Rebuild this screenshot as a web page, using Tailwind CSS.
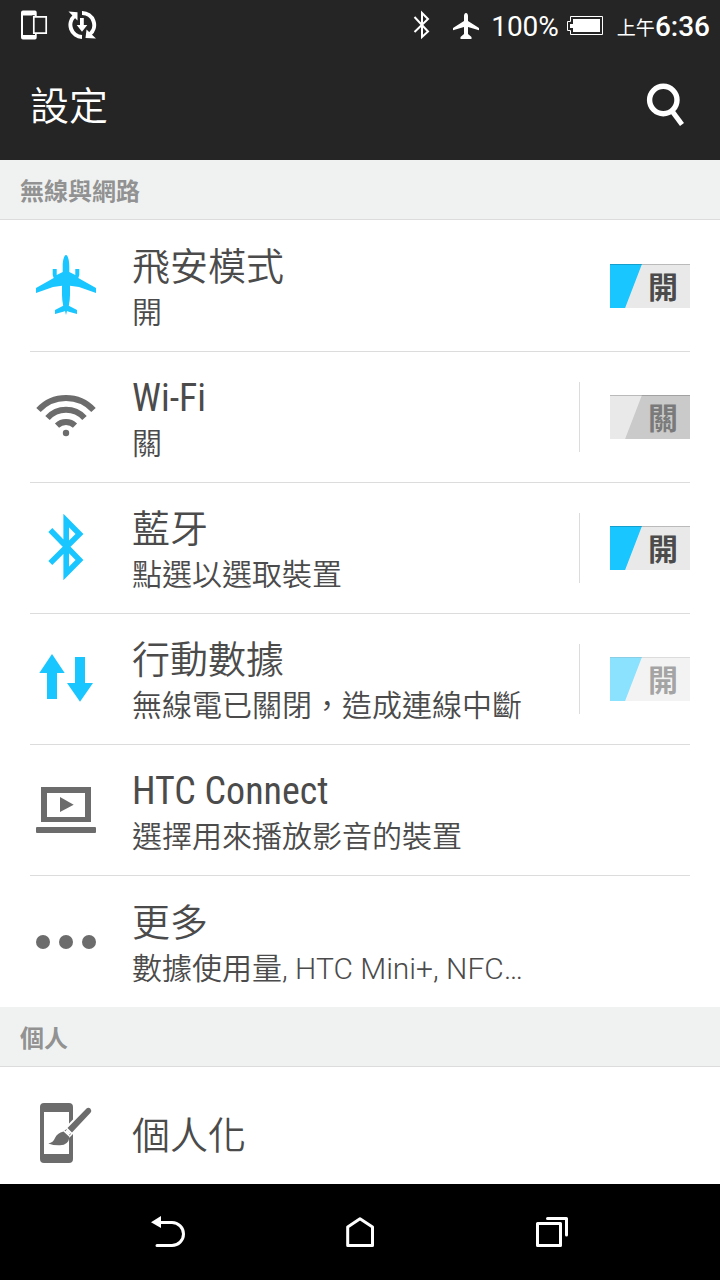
<!DOCTYPE html>
<html lang="zh-Hant">
<head>
<meta charset="utf-8">
<meta name="viewport" content="width=device-width, initial-scale=1">
<title>設定</title>
<script src="https://cdn.jsdelivr.net/npm/@tailwindcss/browser@4"></script>
</head>
<body class="flex h-screen flex-col overflow-hidden bg-white font-['Roboto','Noto_Sans_CJK_TC',sans-serif] text-[#4b4b4b]">

<header class="shrink-0 bg-[#252525] text-white">
  <div class="flex h-[50px] items-center justify-between pr-[10px] pl-5">
    <div class="flex items-center gap-5">
      <svg class="h-[30px] w-7" viewBox="0 0 28 30" fill="none" aria-hidden="true">
        <path fill="#fff" fill-rule="evenodd" d="M3 .5h12q1.700 0 1.700 2v25q0 2-1.700 2H3q-2 0-2-2v-25q0-2 2-2zM3 5.500V25h12V5.500z"/>
        <path fill="#252525" d="M12 5.500h2v19h-2z"/>
        <path d="M13.800 6.800h12.400v16.400H13.800z" fill="#252525" stroke="#fff" stroke-width="1.700"/>
      </svg>
      <svg class="h-[30px] w-[30px]" viewBox="0 0 30 30" fill="none" aria-hidden="true">
        <path d="M14 27A12 12 0 0 1 6.500 6M14 3A12 12 0 0 1 21.500 24.500" stroke="#fff" stroke-width="4"/>
        <path fill="#fff" d="M.5 1.500l9 .8v8.200zM28 28.500l-10.500-.5 1-8.500zM12 8h3.800v7h3.500L14 21.800 8.700 15H12z"/>
      </svg>
    </div>
    <div class="flex items-center">
      <svg class="mr-[22px] h-[30px] w-[18px]" viewBox="0 0 18 30" fill="none" stroke="#fff" stroke-width="2" aria-hidden="true"><path d="M1.500 7l13.500 14.500L9 27V3l6 6L1.500 22"/></svg>
      <svg class="mr-3 h-[30px] w-[26px]" viewBox="0 0 26 30" fill="#fff" aria-hidden="true"><path d="M13 3c1.400 0 2 1.500 2 3v5l11 7v2.200l-11-3.200v7l3.500 3V29h-11v-2l3.500-3v-7L0 20.200V18l11-7V6c0-1.500.6-3 2-3z"/></svg>
      <span class="mr-2 pt-1 text-[28px] leading-[46px]">100%</span>
      <svg class="mr-[14px] h-5 w-9" viewBox="0 0 36 20" aria-hidden="true"><path d="M3.500 1.500h32v18h-32v-4h-3v-9h3z" fill="none" stroke="#fff"/><path fill="#fff" d="M6 4h27v13H6v-4H3V9h3z"/></svg>
      <span class="pt-2 text-[19px] leading-[42px]">上午</span><span class="pt-1 text-[28px] leading-[46px] font-medium">6:36</span>
    </div>
  </div>
  <div class="flex h-[110px] items-center justify-between px-[30px]">
    <h1 class="pt-1 text-[39px] leading-[48px] font-[350]">設定</h1>
    <button type="button" aria-label="搜尋" class="h-[50px] w-[50px]">
      <svg class="h-[50px] w-[50px]" viewBox="0 0 50 50" fill="none" stroke="#fff" aria-hidden="true"><circle cx="23.300" cy="20" r="13.700" stroke-width="5.400"/><path d="M32 31l10 13.500" stroke-width="5"/></svg>
    </button>
  </div>
</header>

<main class="min-h-0 flex-1 overflow-hidden">
  <section>
    <h2 class="h-[60px] border-b border-[#dcdcdc] bg-[#f0f2f2] px-5 pt-1 text-[24px] leading-[56px] font-bold text-[#929292]">無線與網路</h2>
    <ul class="px-[30px] pt-px">
      <li class="flex h-[131px] items-center border-b border-[#dcdcdc]">
        <a href="#airplane" class="flex min-w-0 flex-1 items-center">
          <svg class="mr-[30px] h-[72px] w-[72px] shrink-0" viewBox="0 0 72 72" fill="#1ac6ff" aria-hidden="true"><path d="M36 5c2 0 3.300 6 3.300 11v6l6 3V19h4v6l-1 3L66 38v5l-17-6-9-1.300V45q0 5-1.200 10.700L47 60v4l-9-2.500-1-.5-1 4-1-4-1 .5L25 64v-4l8.200-4.300Q32 50 32 45v-9.300L23 37 6 43v-5l17.700-10-1-3v-6h4v6l6-3v-6c0-5 1.300-11 3.300-11z"/></svg>
          <span class="flex min-w-0 flex-col pt-2"><span class="text-[38px] leading-[46px] font-[350]">飛安模式</span><span class="text-[30px] leading-[46px] font-[350]">開</span></span>
        </a>
        <label class="flex h-[44px] w-20 items-center justify-end bg-[linear-gradient(to_bottom,#0003_1px,transparent_1px),linear-gradient(111deg,#1ac6ff_32.5%,#e9e9e9_33.5%)] pt-1 pr-3 text-[30px] leading-10 font-bold"><input type="checkbox" checked aria-label="飛安模式" class="sr-only"><span>開</span></label>
      </li>
      <li class="flex h-[131px] items-center border-b border-[#dcdcdc]">
        <a href="#wifi" class="flex min-w-0 flex-1 items-center">
          <svg class="mr-[30px] h-[72px] w-[72px] shrink-0" viewBox="0 0 72 72" fill="none" stroke="#6c6c6c" stroke-width="6" aria-hidden="true"><path d="M8.500 29A37.500 37.500 0 0 1 63.500 29M17.500 37A25 25 0 0 1 54.500 37M27 44.700A13 13 0 0 1 45 44.700"/><circle cx="36" cy="52" r="3.200" fill="#6c6c6c" stroke="none"/></svg>
          <span class="flex min-w-0 flex-col pt-2"><span class="font-['Roboto_Condensed','Roboto','Noto_Sans_CJK_TC',sans-serif] text-[38px] leading-[46px]">Wi-Fi</span><span class="text-[30px] leading-[46px] font-[350]">關</span></span>
        </a>
        <span class="mr-[30px] h-[70px] w-px bg-[#dcdcdc]"></span>
        <label class="flex h-[44px] w-20 items-center justify-end bg-[linear-gradient(to_bottom,#0003_1px,transparent_1px),linear-gradient(111deg,#e9e9e9_32.5%,#cacaca_33.5%)] pt-1 pr-3 text-[30px] leading-10 font-bold text-[#7a7a7a]"><input type="checkbox" aria-label="Wi-Fi" class="sr-only"><span>關</span></label>
      </li>
      <li class="flex h-[131px] items-center border-b border-[#dcdcdc]">
        <a href="#bluetooth" class="flex min-w-0 flex-1 items-center">
          <svg class="mr-[30px] h-[72px] w-[72px] shrink-0" viewBox="0 0 72 72" fill="none" stroke="#1ac6ff" stroke-width="5.600" aria-hidden="true"><path d="M20.300 18L49.500 48 36.200 61.500V8.500L49.500 22 20.300 51"/></svg>
          <span class="flex min-w-0 flex-col pt-2"><span class="text-[38px] leading-[46px] font-[350]">藍牙</span><span class="text-[30px] leading-[46px] font-[350]">點選以選取裝置</span></span>
        </a>
        <span class="mr-[30px] h-[70px] w-px bg-[#dcdcdc]"></span>
        <label class="flex h-[44px] w-20 items-center justify-end bg-[linear-gradient(to_bottom,#0003_1px,transparent_1px),linear-gradient(111deg,#1ac6ff_32.5%,#e9e9e9_33.5%)] pt-1 pr-3 text-[30px] leading-10 font-bold"><input type="checkbox" checked aria-label="藍牙" class="sr-only"><span>開</span></label>
      </li>
      <li class="flex h-[131px] items-center border-b border-[#dcdcdc]">
        <a href="#mobile-data" class="flex min-w-0 flex-1 items-center">
          <svg class="mr-[30px] h-[72px] w-[72px] shrink-0" viewBox="0 0 72 72" fill="#1ac6ff" aria-hidden="true"><path d="M22 11l12.700 19H27v26H17V30H9.300zM45 14h10v26h8L50 58.700 37 40h8z"/></svg>
          <span class="flex min-w-0 flex-col pt-2"><span class="text-[38px] leading-[46px] font-[350]">行動數據</span><span class="text-[30px] leading-[46px] font-[350]">無線電已關閉，造成連線中斷</span></span>
        </a>
        <span class="mr-[30px] h-[70px] w-px bg-[#dcdcdc]"></span>
        <label class="flex h-[44px] w-20 items-center justify-end bg-[linear-gradient(to_bottom,#0003_1px,transparent_1px),linear-gradient(111deg,#1ac6ff_32.5%,#e9e9e9_33.5%)] pt-1 pr-3 text-[30px] leading-10 font-bold opacity-50"><input type="checkbox" checked disabled aria-label="行動數據" class="sr-only"><span>開</span></label>
      </li>
      <li class="flex h-[131px] items-center border-b border-[#dcdcdc]">
        <a href="#connect" class="flex min-w-0 flex-1 items-center">
          <svg class="mr-[30px] h-[72px] w-[72px] shrink-0" viewBox="0 0 72 72" fill="#6c6c6c" aria-hidden="true"><path fill-rule="evenodd" d="M11 13h50v35H11zM17 19v24h38V19z"/><path d="M30 23l13.700 7.700L30 38z"/><rect x="6" y="53" width="60" height="6" rx="1"/></svg>
          <span class="flex min-w-0 flex-col pt-2"><span class="font-['Roboto_Condensed','Roboto','Noto_Sans_CJK_TC',sans-serif] text-[38px] leading-[46px]">HTC Connect</span><span class="text-[30px] leading-[46px] font-[350]">選擇用來播放影音的裝置</span></span>
        </a>
      </li>
      <li class="flex h-[131px] items-center">
        <a href="#more" class="flex min-w-0 flex-1 items-center">
          <svg class="mr-[30px] h-[72px] w-[72px] shrink-0" viewBox="0 0 72 72" fill="#6c6c6c" aria-hidden="true"><circle cx="13" cy="36" r="7"/><circle cx="36" cy="36" r="7"/><circle cx="59" cy="36" r="7"/></svg>
          <span class="flex min-w-0 flex-col pt-2"><span class="text-[38px] leading-[46px] font-[350]">更多</span><span class="text-[30px] leading-[46px] font-[350]">數據使用量<span class="font-light">, HTC Mini+, NFC…</span></span></span>
        </a>
      </li>
    </ul>
  </section>
  <section>
    <h2 class="h-[60px] border-b border-[#dcdcdc] bg-[#f0f2f2] px-5 pt-1 text-[24px] leading-[56px] font-bold text-[#929292]">個人</h2>
    <ul class="px-[30px] pt-px">
      <li class="flex h-[131px] items-center">
        <a href="#personalize" class="flex min-w-0 flex-1 items-center">
          <svg class="mr-[30px] h-[72px] w-[72px] shrink-0" viewBox="0 0 72 72" fill="#6c6c6c" aria-hidden="true">
            <path fill-rule="evenodd" d="M14 5h25q4 0 4 4v52q0 4-4 4H14q-4 0-4-4V9q0-4 4-4zM14 14v42h25V14z"/>
            <path d="M58.500 12.500L36 36" fill="none" stroke="#fff" stroke-width="10" stroke-linecap="round"/>
            <path d="M56.500 10.500q2-1.500 4 .2 1.500 2 0 4L42 34.500 37.500 30zM36.500 31.200l4.500 4.500-1.500 1.700-5-4.800zM33.500 33.500l6 5.500q-1 8-9.500 8.300-6 .3-11.700-1.800 5-1 6.700-5.500 2-5 8.500-6.500z"/>
            <path d="M37 31.500l3.700 3.700-2 2-3.700-3.700z" fill="#fff"/>
          </svg>
          <span class="pt-1 text-[38px] leading-[46px] font-[350]">個人化</span>
        </a>
      </li>
    </ul>
  </section>
</main>

<nav aria-label="系統導覽" class="flex h-24 shrink-0 items-center justify-center bg-black">
  <button type="button" aria-label="返回" class="flex h-24 w-48 items-center justify-center">
    <svg class="h-12 w-12" viewBox="0 0 48 48" fill="none" stroke="#fff" stroke-width="3" aria-hidden="true"><path d="M14 14.500h14a11.500 11.500 0 0 1 0 23H13" stroke-linecap="round"/><path d="M7 14.300L17 8v12z" fill="#fff" stroke="none"/></svg>
  </button>
  <button type="button" aria-label="首頁" class="flex h-24 w-48 items-center justify-center">
    <svg class="h-12 w-12" viewBox="0 0 48 48" fill="none" stroke="#fff" stroke-width="3" stroke-linejoin="round" aria-hidden="true"><path d="M11.700 19L24 10.800 36.500 19v18.500H11.700z"/></svg>
  </button>
  <button type="button" aria-label="最近使用的應用程式" class="flex h-24 w-48 items-center justify-center">
    <svg class="h-12 w-12" viewBox="0 0 48 48" fill="none" stroke="#fff" stroke-width="3" stroke-linejoin="round" stroke-linecap="round" aria-hidden="true"><path d="M9.500 15.500h23v22h-23zM19.500 10.500h19V27"/></svg>
  </button>
</nav>
</body>
</html>
